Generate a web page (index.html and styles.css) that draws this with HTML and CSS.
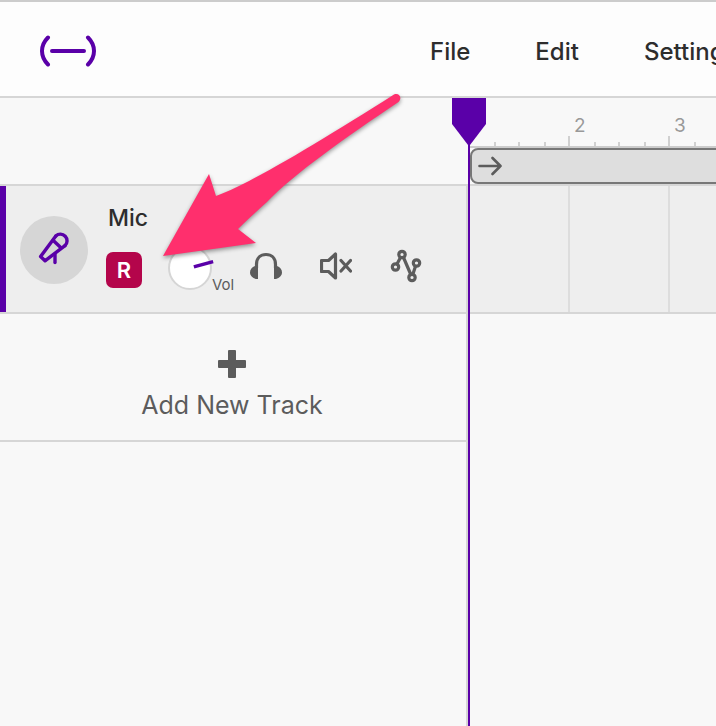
FILE: index.html
```html
<!DOCTYPE html>
<html lang="en">
<head>
<meta charset="utf-8">
<meta name="viewport" content="width=device-width, initial-scale=1">
<title>Studio</title>
<link rel="stylesheet" href="styles.css">
</head>
<body>
<header class="topbar">
  <a class="logo" href="#" aria-label="Home">
    <svg width="56" height="32" viewBox="0 0 56 32" fill="none" stroke="currentColor" stroke-width="4" stroke-linecap="round">
      <path d="M8 2.500Q2 8.500 2 16T8 29.500M48 2.500Q54 8.500 54 16T48 29.500M12 16H44"/>
    </svg>
  </a>
  <nav class="menu">
    <button type="button">File</button>
    <button type="button">Edit</button>
    <button type="button">Settings</button>
  </nav>
</header>

<main class="workspace">
  <section class="tracks">
    <div class="tracks-head"></div>
    <div class="tracks-body">
      <article class="track">
        <div class="avatar">
          <svg width="32" height="36" viewBox="0 -2 32 36" fill="none" stroke="currentColor" stroke-width="3.400" stroke-linecap="round" stroke-linejoin="round">
            <path d="M17.800 3L2.600 23.600L7 27.800L27 12.600"/>
            <path d="M17.800 3A6.400 6.400 0 1 1 27 12.600"/>
            <path d="M15.300 7.500L22.700 14.500"/>
            <path d="M17 21.500V29.500"/>
          </svg>
        </div>
        <div class="track-main">
          <h2>Mic</h2>
          <div class="controls">
            <button class="record" type="button" aria-label="Record arm">R</button>
            <label class="volume">
              <svg width="48" height="44" viewBox="0 0 48 44">
                <circle cx="22" cy="22" r="21" fill="#fff" stroke="#d5d5d5" stroke-width="2"/>
                <path d="M27.500 20.500L43.500 16" stroke="#5a00a8" stroke-width="3.400" stroke-linecap="square"/>
              </svg>
              <input type="range" min="0" max="100" value="70">
              <span>Vol</span>
            </label>
            <button class="tool" type="button" aria-label="Solo">
              <svg width="32" height="40" viewBox="0 0 32 40">
                <path d="M6.500 22V18.500C6.500 12 10.500 8.500 16 8.500S25.500 12 25.500 18.500V22" fill="none" stroke="currentColor" stroke-width="3.200"/>
                <path d="M8 20V33H6C2.500 32 0 29.500 0 26.500S2 21 5 20ZM24 20V33H26C29.500 32 32 29.500 32 26.500S30 21 27 20Z" fill="currentColor"/>
              </svg>
            </button>
            <button class="tool" type="button" aria-label="Mute">
              <svg width="32" height="40" viewBox="0 0 32 40" fill="none" stroke="currentColor" stroke-width="3.200" stroke-linecap="round" stroke-linejoin="round">
                <path d="M1.500 14.500H8.500L15.500 8V32L8.500 25.500H1.500Z"/>
                <path d="M21 14.500L30.500 25M30.500 14.500L21 25"/>
              </svg>
            </button>
            <button class="tool" type="button" aria-label="Automation">
              <svg width="32" height="40" viewBox="0 0 32 40" fill="none" stroke="currentColor" stroke-width="3.200">
                <circle cx="5.500" cy="21" r="3.200"/>
                <circle cx="12" cy="8.500" r="3.200"/>
                <circle cx="22" cy="31.500" r="3.200"/>
                <circle cx="26.500" cy="17" r="3.200"/>
                <path d="M7 18L10.500 11.500M13.500 11.500L20.800 28.500M22.800 28.500L25.500 20.200"/>
              </svg>
            </button>
          </div>
        </div>
      </article>
      <button class="add-track" type="button">
        <svg width="28" height="28" viewBox="0 0 28 28" fill="currentColor">
          <rect x="10" y="0" width="8" height="28" rx="1"/>
          <rect x="0" y="10" width="28" height="8" rx="1"/>
        </svg>
        <span>Add New Track</span>
      </button>
    </div>
  </section>

  <section class="timeline">
    <div class="timeline-head">
      <ol class="ruler">
        <li></li>
        <li>2</li>
        <li>3</li>
      </ol>
      <button class="loop" type="button" aria-label="Loop region">
        <svg width="24" height="20" viewBox="0 0 24 20" fill="none" stroke="currentColor" stroke-width="2.600" stroke-linecap="round" stroke-linejoin="round">
          <path d="M1.500 10H22.500M14.500 2L22.500 10L14.500 18"/>
        </svg>
      </button>
    </div>
    <div class="lane"></div>
    <div class="playhead">
      <svg width="34" height="48" viewBox="0 0 34 48" fill="currentColor">
        <path d="M0 0H34V26L18 47H16L0 26Z"/>
      </svg>
    </div>
  </section>
</main>

<svg class="pointer" width="250" height="180" viewBox="0 0 250 180" aria-hidden="true">
  <path d="M8 171L54 89L61 111C93 100 164 57 239 9.500C244.500 7.500 247.500 13 243.500 17C190 53 140 88 112 117C101 127 92 135 83 144L101 158Z" fill="#ff2f6d"/>
</svg>
</body>
</html>
```

FILE: styles.css
```css
* {
  box-sizing: border-box;
}

:root {
  --purple: #5a00a8;
  --line: #d6d6d6;
  --ink: #2d2d2d;
  --gray: #5c5c5c;
}

body {
  margin: 0;
  min-height: 100vh;
  display: flex;
  flex-direction: column;
  position: relative;
  overflow: hidden;
  background: #f8f8f8;
  color: var(--ink);
  font-family: Inter, "Liberation Sans", sans-serif;
}

button {
  margin: 0;
  padding: 0;
  border: 0;
  background: none;
  color: inherit;
  font: inherit;
  cursor: pointer;
}

svg {
  display: block;
  flex: none;
}

.topbar {
  display: flex;
  align-items: center;
  height: 98px;
  padding: 4px 0 0 40px;
  border-top: 2px solid #ccc;
  border-bottom: 2px solid var(--line);
  background: #fdfdfd;
  overflow: hidden;
}

.logo {
  color: var(--purple);
}

.menu {
  display: flex;
  gap: 65px;
  margin-left: 334px;
  padding-top: 2px;
  font-size: 24px;
  line-height: 32px;
  font-weight: 500;
}

.workspace {
  flex: 1;
  display: grid;
  grid-template-columns: 468px minmax(0, 1fr);
}

.tracks {
  display: flex;
  flex-direction: column;
}

.tracks-head,
.timeline-head {
  height: 88px;
  border-bottom: 2px solid var(--line);
}

.tracks-body {
  flex: 1;
  border-right: 2px solid var(--line);
}

.track {
  display: flex;
  align-items: flex-start;
  gap: 18px;
  height: 128px;
  padding-left: 20px;
  border-bottom: 2px solid var(--line);
  background: linear-gradient(90deg, var(--purple) 6px, #eee 6px);
}

.avatar {
  display: flex;
  align-items: flex-start;
  justify-content: center;
  width: 68px;
  height: 68px;
  margin-top: 30px;
  padding-top: 15px;
  border-radius: 50%;
  background: #d6d6d6;
  color: var(--purple);
}

.track-main {
  display: flex;
  flex-direction: column;
  gap: 12px;
  padding-top: 16px;
}

.track h2 {
  margin: 0 0 0 2px;
  font-size: 23px;
  line-height: 32px;
  font-weight: 500;
}

.controls {
  display: flex;
  align-items: flex-start;
  color: var(--gray);
}

.record {
  width: 36px;
  height: 36px;
  margin: 6px 26px 0 0;
  border-radius: 7px;
  background: #b4054b;
  color: #fff;
  font-size: 22px;
  line-height: 36px;
  font-weight: 600;
}

.volume {
  position: relative;
  display: flex;
  align-items: flex-start;
  margin-right: 16px;
  font-size: 15px;
  line-height: 16px;
}

.volume svg {
  margin-right: -4px;
}

.volume span {
  padding-top: 31px;
}

.volume input {
  position: absolute;
  inset: 0;
  width: 44px;
  height: 44px;
  margin: 0;
  opacity: 0;
}

.tool + .tool {
  margin-left: 38px;
}

.add-track {
  display: flex;
  flex-direction: column;
  align-items: center;
  gap: 10px;
  width: 100%;
  height: 128px;
  padding: 36px 2px 0 0;
  border-bottom: 2px solid var(--line);
  color: var(--gray);
  font-size: 25px;
  line-height: 34px;
}

.timeline {
  position: relative;
}

.timeline-head {
  display: flex;
  flex-direction: column;
  overflow: hidden;
}

.ruler {
  display: flex;
  height: 50px;
  margin: 0;
  padding: 0;
  list-style: none;
  border-bottom: 2px solid #ccc;
  background-image:
    linear-gradient(90deg, #d0d0d0 2px, transparent 2px),
    linear-gradient(90deg, transparent 26px, #d0d0d0 26px 28px, transparent 28px 50px, #d0d0d0 50px 52px, transparent 52px 76px, #d0d0d0 76px 78px, transparent 78px);
  background-size: 100px 10px, 100px 4px;
  background-position: 0 100%;
  background-repeat: repeat-x;
}

.ruler li {
  flex: 0 0 100px;
  padding: 16px 0 0 6px;
  color: #999;
  font-size: 19px;
  line-height: 24px;
}

.loop {
  display: flex;
  align-items: center;
  height: 36px;
  margin: 0 -8px 0 2px;
  padding-left: 6px;
  border: 2px solid #777;
  border-radius: 8px;
  background: #dedede;
  color: var(--gray);
}

.lane {
  height: 128px;
  border-bottom: 2px solid var(--line);
  background: #eee linear-gradient(90deg, #ddd 2px, transparent 2px) 0 0 / 100px 100%;
}

.playhead {
  position: absolute;
  top: 0;
  bottom: 0;
  left: 0;
  width: 2px;
  background: var(--purple);
  color: var(--purple);
}

.playhead svg {
  margin-left: -16px;
}

.pointer {
  position: absolute;
  top: 85px;
  left: 155px;
  pointer-events: none;
  filter: drop-shadow(0 2px 2px rgba(0, 0, 0, 0.4));
}
```
